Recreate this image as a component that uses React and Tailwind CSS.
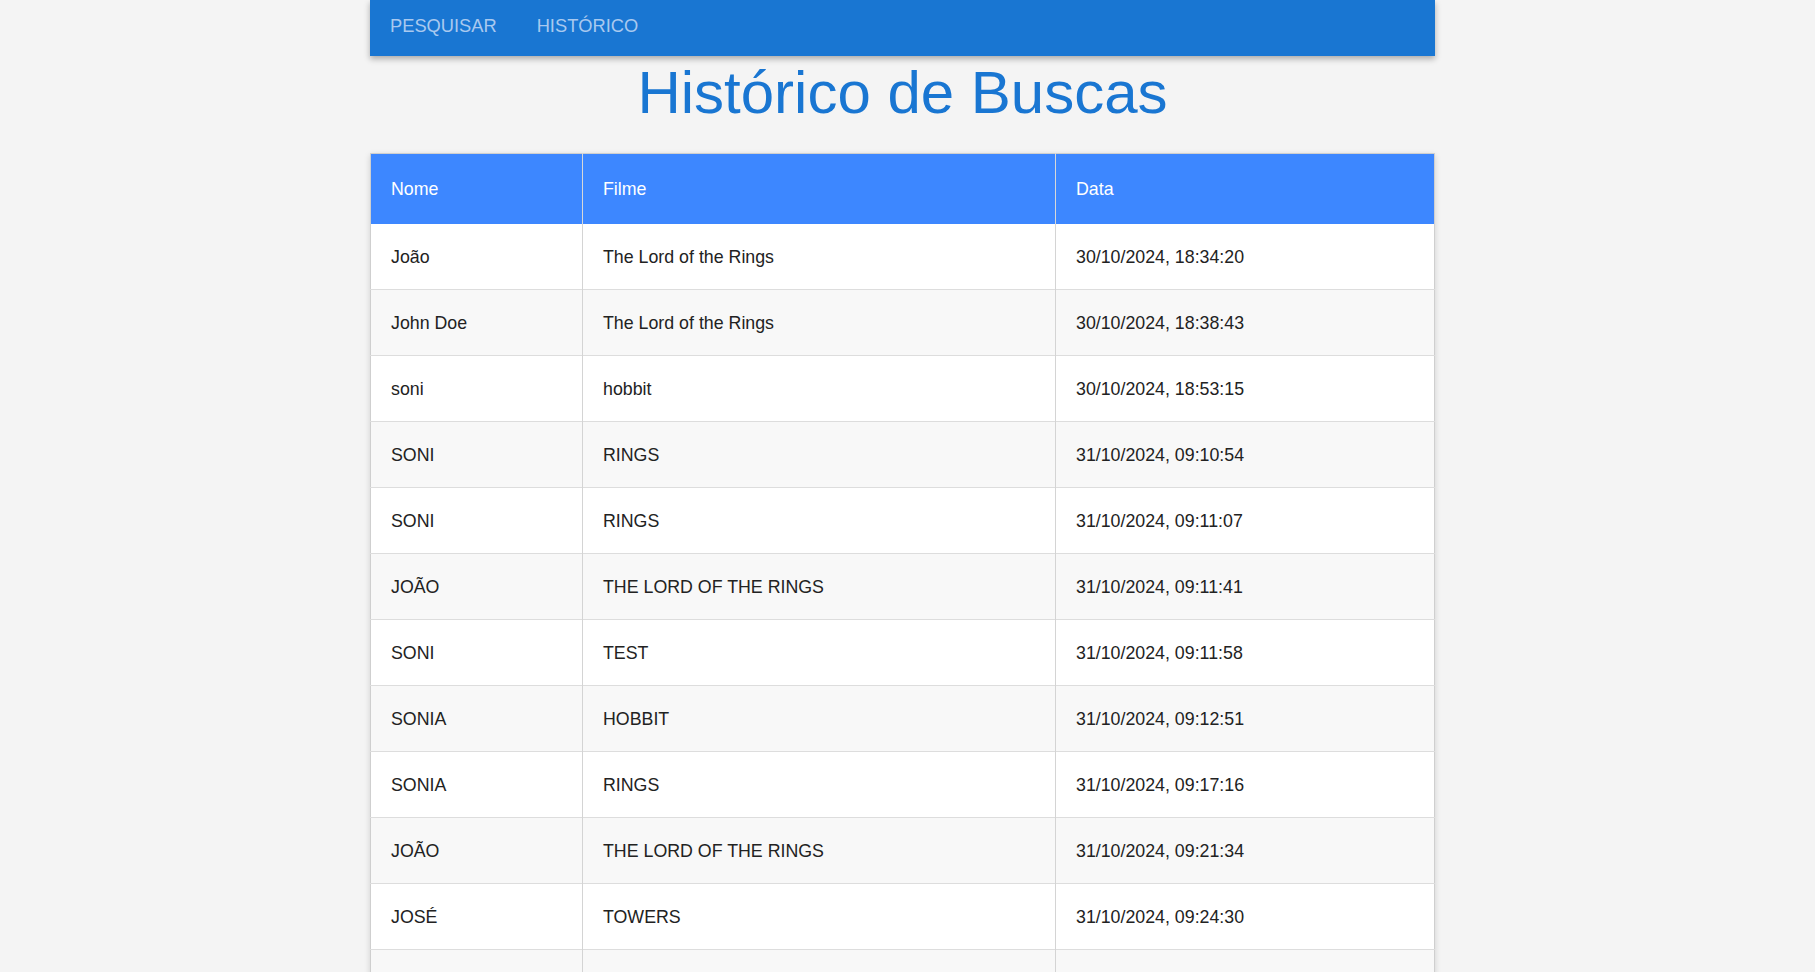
import React from 'react';

const rows = [
  ['João', 'The Lord of the Rings', '30/10/2024, 18:34:20'],
  ['John Doe', 'The Lord of the Rings', '30/10/2024, 18:38:43'],
  ['soni', 'hobbit', '30/10/2024, 18:53:15'],
  ['SONI', 'RINGS', '31/10/2024, 09:10:54'],
  ['SONI', 'RINGS', '31/10/2024, 09:11:07'],
  ['JOÃO', 'THE LORD OF THE RINGS', '31/10/2024, 09:11:41'],
  ['SONI', 'TEST', '31/10/2024, 09:11:58'],
  ['SONIA', 'HOBBIT', '31/10/2024, 09:12:51'],
  ['SONIA', 'RINGS', '31/10/2024, 09:17:16'],
  ['JOÃO', 'THE LORD OF THE RINGS', '31/10/2024, 09:21:34'],
  ['JOSÉ', 'TOWERS', '31/10/2024, 09:24:30'],
  ['JOSÉ', 'TOWERS', '31/10/2024, 09:25:02'],
  ['SONI', 'HOBBIT', '31/10/2024, 09:26:11'],
];

const App = () => {
  return (
    <div className="min-h-screen bg-[#f4f4f4] font-['Liberation_Sans',Arial,sans-serif]">
      <div className="w-[1065px] ml-[370px]">
        {/* Top navigation */}
        <nav className="h-14 bg-[#1976d2] flex items-center px-5 pb-[5px] gap-[40px] shadow-[0_3px_6px_rgba(0,0,0,0.3)]">
          <a className="text-[18.3px] text-[#a9c9ef] uppercase">Pesquisar</a>
          <a className="text-[18.3px] text-[#a9c9ef] uppercase">Histórico</a>
        </nav>

        <h1 className="text-center text-[60px] leading-[69px] text-[#1976d2] mt-[2px] mb-[26px]">
          Histórico de Buscas
        </h1>

        <table className="w-full border-collapse border border-[#cfcfcf] shadow-[0_2px_6px_rgba(0,0,0,0.15)] text-[17.8px]">
          <thead>
            <tr className="bg-[#3d87ff] text-white h-[70px]">
              <th className="w-[212px] text-left font-normal px-5 pt-[2px] border-r border-[#d8d8d8]">Nome</th>
              <th className="w-[473px] text-left font-normal px-5 pt-[2px] border-r border-[#d8d8d8]">Filme</th>
              <th className="text-left font-normal px-5 pt-[2px]">Data</th>
            </tr>
          </thead>
          <tbody className="text-[#222]">
            {rows.map((r, i) => (
              <tr key={i} className={`border-b border-[#dddddd] ${i % 2 === 0 ? 'bg-white' : 'bg-[#f8f8f8]'}`}>
                <td className="px-5 pt-[2px] h-[66px] border-r border-[#d4d4d4]">{r[0]}</td>
                <td className="px-5 pt-[2px] border-r border-[#d4d4d4]">{r[1]}</td>
                <td className="px-5 pt-[2px]">{r[2]}</td>
              </tr>
            ))}
          </tbody>
        </table>
      </div>
    </div>
  );
};

export default App;
